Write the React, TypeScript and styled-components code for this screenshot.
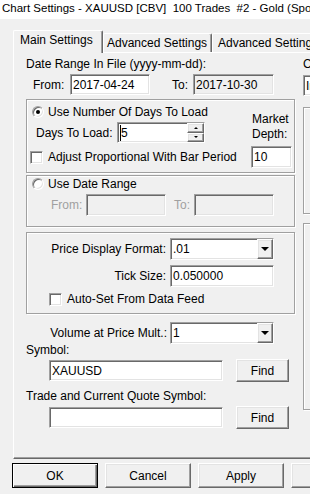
import React from "react";
import styled, { createGlobalStyle, css } from "styled-components";

const GlobalStyle = createGlobalStyle`
  html, body {
    margin: 0;
    padding: 0;
    background: #f0f0f0;
    overflow: hidden;
  }
  body {
    width: 310px;
    height: 494px;
    font-family: "Liberation Sans", Arial, sans-serif;
    font-size: 12px;
    color: #000;
  }
`;

const sunken = css`
  box-sizing: border-box;
  border: 1px solid;
  border-color: #a0a0a0 #fff #fff #a0a0a0;
  box-shadow: inset 1px 1px 0 #696969, inset -1px -1px 0 #e3e3e3;
`;

const raised = css`
  box-sizing: border-box;
  border: 1px solid;
  border-color: #fff #696969 #696969 #fff;
  box-shadow: inset -1px -1px 0 #a0a0a0, inset 1px 1px 0 #e3e3e3;
  background: #f0f0f0;
`;

export default function App() {
  return (
    <>
      <GlobalStyle />
      <Window>
        <TitleBar>Chart Settings - XAUUSD [CBV]  100 Trades  #2 - Gold (Spot)</TitleBar>
        <Body>
          <TabStrip>
            <Tab $active $w={90} $pl={6}>Main Settings</Tab>
            <Tab $w={109} $pl={3}>Advanced Settings</Tab>
            <Tab $w={120} $pl={5}>Advanced Settings 2</Tab>
          </TabStrip>

          <Panel>
            <MainCol>
              <Caption $mt={4}>Date Range In File (yyyy-mm-dd):</Caption>
              <Row $mt={3} $h={21} $pl={7}>
                <Label $w={37}>From:</Label>
                <Field $w={80}>2017-04-24</Field>
                <Label $w={43} $right $pr={5}>To:</Label>
                <Field $w={81} $ro>2017-10-30</Field>
              </Row>

              <Group $mt={4} $h={74} $flex>
                <GroupMain>
                  <Row $mt={5} $h={14} $pl={5} $gap={4}>
                    <Radio $on />
                    <span>Use Number Of Days To Load</span>
                  </Row>
                  <Row $mt={3} $h={21} $pl={9}>
                    <Label $w={81}>Days To Load:</Label>
                    <Field $w={88} $pr={0}>
                      <Caret />
                      <FieldText>5</FieldText>
                      <Spinner>
                        <SpinBtn>
                          <Arrow $up />
                        </SpinBtn>
                        <SpinBtn>
                          <Arrow />
                        </SpinBtn>
                      </Spinner>
                    </Field>
                  </Row>
                  <Row $mt={7} $h={14} $pl={3} $gap={5}>
                    <Check />
                    <span>Adjust Proportional With Bar Period</span>
                  </Row>
                </GroupMain>
                <DepthCol>
                  <DepthLine>Market</DepthLine>
                  <DepthLine>Depth:</DepthLine>
                  <Field $w={41} $h={22} $mt={4}>10</Field>
                </DepthCol>
              </Group>

              <Group $mt={2} $h={52}>
                <Row $mt={1} $h={14} $pl={5} $gap={4}>
                  <Radio />
                  <span>Use Date Range</span>
                </Row>
                <Row $mt={3} $h={22} $pl={24}>
                  <Label $w={35} $disabled>From:</Label>
                  <Field $w={80} $h={22} $ro />
                  <Label $w={28} $right $pr={4} $disabled>To:</Label>
                  <Field $w={80} $h={22} $ro />
                </Row>
              </Group>

              <Group $mt={5} $h={82}>
                <Row $mt={5} $h={22}>
                  <Label $w={143} $right $pr={4}>Price Display Format:</Label>
                  <Field $w={104} $h={22} $pr={0}>
                    <FieldText>.01</FieldText>
                    <DropBtn>
                      <Arrow $big />
                    </DropBtn>
                  </Field>
                </Row>
                <Row $mt={5} $h={22}>
                  <Label $w={143} $right $pr={4}>Tick Size:</Label>
                  <Field $w={104} $h={22}>0.050000</Field>
                </Row>
                <Row $mt={5} $h={14} $pl={22} $gap={5}>
                  <Check />
                  <span>Auto-Set From Data Feed</span>
                </Row>
              </Group>

              <Row $mt={8} $h={22}>
                <Label $w={144} $right $pr={3}>Volume at Price Mult.:</Label>
                <Field $w={104} $h={22} $pr={0}>
                  <FieldText>1</FieldText>
                  <DropBtn>
                    <Arrow $big />
                  </DropBtn>
                </Field>
              </Row>
              <Caption $mt={-1}>Symbol:</Caption>
              <Row $mt={2} $h={23} $pl={23}>
                <Field $w={174}>XAUUSD</Field>
                <Button $w={53} $h={23} $ml={13}>Find</Button>
              </Row>
              <Caption $mt={7}>Trade and Current Quote Symbol:</Caption>
              <Row $mt={3} $h={23} $pl={23}>
                <Field $w={174} />
                <Button $w={53} $h={23} $ml={13}>Find</Button>
              </Row>
            </MainCol>

            <SideCol>
              <Caption $mt={4}>Chart Region:</Caption>
              <Field $w={80} $mt={4}>Intraday</Field>
              <Group $mt={11} $h={107} $w={150} />
              <Group $mt={9} $h={187} $w={150} />
            </SideCol>
          </Panel>

          <ButtonRow>
            <Button $w={86} $h={25} $default>OK</Button>
            <Button $w={86} $h={25}>Cancel</Button>
            <Button $w={86} $h={25}>Apply</Button>
            <Button $w={86} $h={25}>Help</Button>
          </ButtonRow>
        </Body>
      </Window>
    </>
  );
}

const Window = styled.div`
  width: 440px;
  height: 494px;
  display: flex;
  flex-direction: column;
`;

const TitleBar = styled.div`
  height: 19px;
  background: #fff;
  padding-left: 2px;
  line-height: 17px;
  font-size: 11.5px;
  white-space: pre;
  overflow: hidden;
`;

const Body = styled.div`
  padding: 11px 0 0 13px;
  display: flex;
  flex-direction: column;
`;

const TabStrip = styled.div`
  display: flex;
  align-items: flex-end;
  height: 22px;
  position: relative;
  z-index: 1;
`;

const Tab = styled.div<{ $active?: boolean; $w: number; $pl: number }>`
  box-sizing: border-box;
  width: ${(p) => p.$w}px;
  height: ${(p) => (p.$active ? 23 : 19)}px;
  margin-bottom: ${(p) => (p.$active ? -1 : 0)}px;
  padding: 2px 0 0 ${(p) => p.$pl}px;
  line-height: 14px;
  white-space: nowrap;
  overflow: hidden;
  background: #f0f0f0;
  border-top: 1px solid #fff;
  border-left: 1px solid #fff;
  border-right: 1px solid #696969;
  box-shadow: inset -1px 0 0 #a0a0a0;
  border-radius: 2px 2px 0 0;
  flex: none;
`;

const Panel = styled.div`
  box-sizing: border-box;
  height: 407px;
  display: flex;
  border-top: 1px solid #fff;
  border-left: 1px solid #fff;
  border-bottom: 1px solid #696969;
  box-shadow: inset 0 -1px 0 #a0a0a0;
`;

const MainCol = styled.div`
  box-sizing: border-box;
  width: 289px;
  padding-left: 12px;
  display: flex;
  flex-direction: column;
  flex: none;
`;

const SideCol = styled.div`
  flex: 1;
  display: flex;
  flex-direction: column;
`;

const Caption = styled.div<{ $mt: number }>`
  margin-top: ${(p) => p.$mt}px;
  height: 14px;
  line-height: 14px;
  white-space: nowrap;
`;

const Row = styled.div<{ $mt?: number; $h: number; $pl?: number; $gap?: number }>`
  display: flex;
  align-items: center;
  margin-top: ${(p) => p.$mt ?? 0}px;
  height: ${(p) => p.$h}px;
  padding-left: ${(p) => p.$pl ?? 0}px;
  gap: ${(p) => p.$gap ?? 0}px;
  white-space: nowrap;
`;

const Label = styled.span<{ $w: number; $right?: boolean; $pr?: number; $disabled?: boolean }>`
  box-sizing: border-box;
  width: ${(p) => p.$w}px;
  flex: none;
  text-align: ${(p) => (p.$right ? "right" : "left")};
  padding-right: ${(p) => p.$pr ?? 0}px;
  color: ${(p) => (p.$disabled ? "#a0a0a0" : "#000")};
  white-space: nowrap;
`;

const Field = styled.div<{ $w: number; $h?: number; $ro?: boolean; $mt?: number; $pr?: number }>`
  ${sunken};
  width: ${(p) => p.$w}px;
  height: ${(p) => p.$h ?? 21}px;
  margin-top: ${(p) => p.$mt ?? 0}px;
  flex: none;
  background: ${(p) => (p.$ro ? "#f0f0f0" : "#fff")};
  display: flex;
  align-items: center;
  padding: 0 ${(p) => p.$pr ?? 2}px 0 2px;
  white-space: nowrap;
  overflow: hidden;
`;

const FieldText = styled.span`
  flex: 1;
`;

const Caret = styled.span`
  width: 1px;
  height: 16px;
  background: #000;
  flex: none;
`;

const Spinner = styled.div`
  display: flex;
  flex-direction: column;
  width: 17px;
  height: 19px;
  flex: none;
`;

const SpinBtn = styled.div`
  ${raised};
  flex: 1;
  display: flex;
  align-items: center;
  justify-content: center;
`;

const DropBtn = styled.div`
  ${raised};
  width: 16px;
  height: 20px;
  flex: none;
  display: flex;
  align-items: center;
  justify-content: center;
`;

const Arrow = styled.span<{ $up?: boolean; $big?: boolean }>`
  width: 0;
  height: 0;
  border-left: ${(p) => (p.$big ? 4 : 2)}px solid transparent;
  border-right: ${(p) => (p.$big ? 4 : 2)}px solid transparent;
  ${(p) =>
    p.$up
      ? css`border-bottom: 2px solid #000;`
      : css`border-top: ${p.$big ? 4 : 2}px solid #000;`}
`;

const Group = styled.div<{ $mt: number; $h: number; $w?: number; $flex?: boolean }>`
  box-sizing: border-box;
  width: ${(p) => p.$w ?? 269}px;
  height: ${(p) => p.$h}px;
  margin-top: ${(p) => p.$mt}px;
  border: 1px solid #a0a0a0;
  box-shadow: inset 1px 1px 0 #fff, 1px 1px 0 #fff;
  display: flex;
  flex-direction: ${(p) => (p.$flex ? "row" : "column")};
  flex: none;
`;

const GroupMain = styled.div`
  flex: 1;
  display: flex;
  flex-direction: column;
`;

const DepthCol = styled.div`
  width: 41px;
  margin: 12px 2px 0 0;
  display: flex;
  flex-direction: column;
`;

const DepthLine = styled.div`
  height: 15px;
  line-height: 15px;
  padding-left: 1px;
`;

const Radio = styled.span<{ $on?: boolean }>`
  ${sunken};
  width: 12px;
  height: 12px;
  border-radius: 50%;
  background: #fff;
  position: relative;
  flex: none;

  &::after {
    content: "";
    display: ${(p) => (p.$on ? "block" : "none")};
    position: absolute;
    left: 3px;
    top: 3px;
    width: 4px;
    height: 4px;
    border-radius: 50%;
    background: #000;
  }
`;

const Check = styled.span`
  ${sunken};
  width: 13px;
  height: 13px;
  background: #fff;
  flex: none;
`;

const Button = styled.div<{ $w: number; $h: number; $ml?: number; $default?: boolean }>`
  ${raised};
  width: ${(p) => p.$w}px;
  height: ${(p) => p.$h}px;
  margin-left: ${(p) => p.$ml ?? 0}px;
  flex: none;
  display: flex;
  align-items: center;
  justify-content: center;
  ${(p) =>
    p.$default &&
    css`
      border-color: #000;
      box-shadow: inset 1px 1px 0 #fff, inset -1px -1px 0 #696969, inset -2px -2px 0 #a0a0a0;
    `}
`;

const ButtonRow = styled.div`
  display: flex;
  gap: 7px;
  margin: 4px 0 0 -1px;
`;
